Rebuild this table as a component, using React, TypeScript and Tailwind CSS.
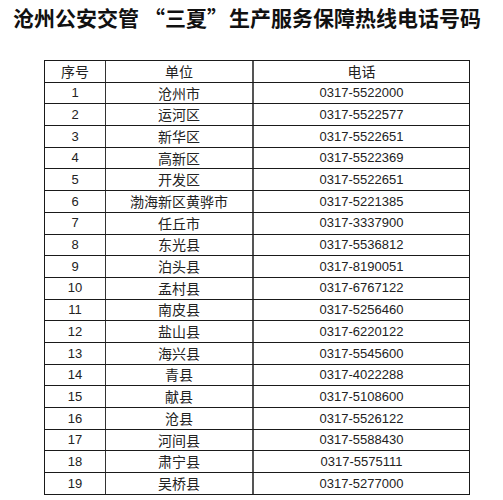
const rows: [string, string, string][] = [
  ["1", "沧州市", "0317-5522000"],
  ["2", "运河区", "0317-5522577"],
  ["3", "新华区", "0317-5522651"],
  ["4", "高新区", "0317-5522369"],
  ["5", "开发区", "0317-5522651"],
  ["6", "渤海新区黄骅市", "0317-5221385"],
  ["7", "任丘市", "0317-3337900"],
  ["8", "东光县", "0317-5536812"],
  ["9", "泊头县", "0317-8190051"],
  ["10", "孟村县", "0317-6767122"],
  ["11", "南皮县", "0317-5256460"],
  ["12", "盐山县", "0317-6220122"],
  ["13", "海兴县", "0317-5545600"],
  ["14", "青县", "0317-4022288"],
  ["15", "献县", "0317-5108600"],
  ["16", "沧县", "0317-5526122"],
  ["17", "河间县", "0317-5588430"],
  ["18", "肃宁县", "0317-5575111"],
  ["19", "吴桥县", "0317-5277000"],
];

const cjk = "font-['Noto_Sans_CJK_SC',sans-serif]";
const num = "font-['Liberation_Sans','Noto_Sans_CJK_SC',sans-serif]";

function Row({ cells, header = false }: { cells: [string, string, string]; header?: boolean }) {
  return (
    <div className="flex h-[21.7px] border-b border-[#1a1a1a] text-[#222]">
      <div className={`flex w-[61px] items-center justify-center border-r border-[#333] ${header ? cjk + " text-[14px]" : num + " text-[13px]"}`}>
        {cells[0]}
      </div>
      <div className={`flex w-[148px] items-center justify-center border-r-2 border-[#555] ${cjk} text-[14px]`}>
        {cells[1]}
      </div>
      <div className={`flex flex-1 items-center justify-center ${header ? cjk + " text-[14px]" : num + " text-[13px]"}`}>
        {cells[2]}
      </div>
    </div>
  );
}

export default function App() {
  return (
    <div className="h-[500px] w-[503px] overflow-hidden bg-white">
      <h1 className={`h-[30px] whitespace-nowrap pl-[13px] pt-[4px] text-[21px] leading-[26px] font-bold text-[#111] ${cjk}`}>
        沧州公安交管
        <span className="inline-block w-[26px] text-right">“</span>
        三夏
        <span className="inline-block w-[22px] text-left">”</span>
        生产服务保障热线电话号码
      </h1>
      <div className="ml-[44px] mt-[30px] w-[426px] border-x border-t border-[#1a1a1a]">
        <Row cells={["序号", "单位", "电话"]} header />
        {rows.map((r) => (
          <Row key={r[0]} cells={r} />
        ))}
      </div>
    </div>
  );
}
